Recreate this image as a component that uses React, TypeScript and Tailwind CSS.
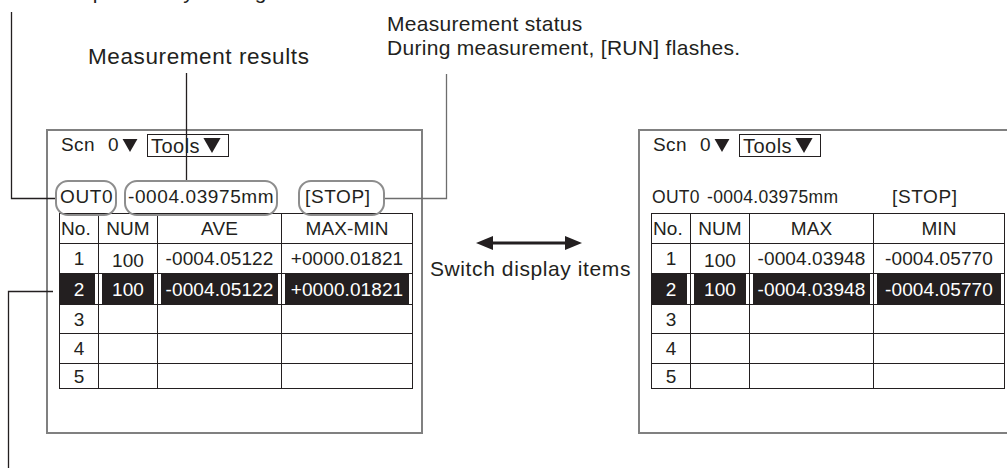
import type { ReactNode } from "react";

// Two monitor screens with callouts: the left one rings the status items,
// the right one shows the same screen after switching display items.

type Row = [string, string, string, string];

const LEFT_ROWS: Row[] = [
  ["1", "100", "-0004.05122", "+0000.01821"],
  ["2", "100", "-0004.05122", "+0000.01821"],
  ["3", "", "", ""],
  ["4", "", "", ""],
  ["5", "", "", ""],
];

const RIGHT_ROWS: Row[] = [
  ["1", "100", "-0004.03948", "-0004.05770"],
  ["2", "100", "-0004.03948", "-0004.05770"],
  ["3", "", "", ""],
  ["4", "", "", ""],
  ["5", "", "", ""],
];

const ROW_H = ["h-[30px]", "h-[31px]", "h-[29px]", "h-[30px]", "h-[25px]"];

function Tri({ className }: { className?: string }) {
  return (
    <svg viewBox="0 0 16 14" className={className} aria-hidden>
      <path d="M0 0H16L8 14Z" fill="currentColor" />
    </svg>
  );
}

function Ring({ ringed, className, children }: { ringed: boolean; className: string; children: ReactNode }) {
  return (
    <span
      className={`flex h-[36px] items-center rounded-[13px] border-2 pb-[1px] ${
        ringed ? "border-[#8d8d8d]" : "border-transparent"
      } ${className}`}
    >
      {children}
    </span>
  );
}

interface ScreenProps {
  headers: [string, string];
  rows: Row[];
  ringed: boolean;
}

function Screen({ headers, rows, ringed }: ScreenProps) {
  return (
    <div className="h-[305px] w-[377px] shrink-0 border-2 border-[#808080] pl-[11px] pt-[3px]">
      <div className="flex h-[23px] items-center text-[19px] tracking-[0.4px]">
        <span className="ml-[2px]">Scn</span>
        <span className="ml-[13px] flex items-center">
          0<Tri className="ml-[3px] h-[13px] w-[16px]" />
        </span>
        <span className="ml-[9px] flex h-[23px] w-[82px] items-center border border-[#231f20] pl-[3px] text-[20px] tracking-[0.5px]">
          Tools
          <Tri className="ml-[2px] h-[15px] w-[20px]" />
        </span>
      </div>

      {ringed ? (
        <div className="relative z-10 -mb-[3px] ml-[-4px] flex h-[59px] items-end text-[19px] tracking-[0.6px]">
          <Ring ringed className="w-[62px] pl-[3px]">
            OUT0
          </Ring>
          <Ring ringed className="ml-[7px] w-[154px] pl-[2px]">
            -0004.03975mm
          </Ring>
          <Ring ringed className="ml-[20px] w-[87px] pl-[5px]">
            [STOP]
          </Ring>
        </div>
      ) : (
        <div className="-mb-[3px] ml-[-4px] flex h-[59px] items-end text-[19px]">
          <Ring ringed={false} className="w-[58px] pl-[3px] text-[17.5px] tracking-[0.3px]">
            OUT0
          </Ring>
          <Ring ringed={false} className="w-[154px] pl-[0px] text-[17.5px] tracking-[0.3px]">
            -0004.03975mm
          </Ring>
          <Ring ringed={false} className="ml-[26px] w-[87px] pl-[5px] tracking-[0.6px]">
            [STOP]
          </Ring>
        </div>
      )}

      <table className="w-[353px] table-fixed border-collapse text-[19px] leading-none tracking-[0.1px]">
        <colgroup>
          <col className="w-[39px]" />
          <col className="w-[59px]" />
          <col className="w-[124px]" />
          <col className="w-[131px]" />
        </colgroup>
        <thead>
          <tr className="h-[30px]">
            <th className="border border-[#231f20] pl-[1px] text-left font-normal">No.</th>
            <th className="border border-[#231f20] text-center font-normal">NUM</th>
            <th className="border border-[#231f20] text-center font-normal">{headers[0]}</th>
            <th className="border border-[#231f20] text-center font-normal">{headers[1]}</th>
          </tr>
        </thead>
        <tbody>
          {rows.map((row, i) => {
            const hot = i === 1;
            return (
              <tr key={row[0]} className={ROW_H[i]}>
                {row.map((cell, j) => (
                  <td
                    key={j}
                    className={`border border-[#231f20] p-0 text-center ${
                      hot
                        ? j === 0
                          ? "bg-[#231f20] text-white shadow-[inset_-3px_0_0_#fff]"
                          : "bg-[#231f20] text-white shadow-[inset_3px_0_0_#fff,inset_-3px_0_0_#fff]"
                        : ""
                    } ${j === 1 && !hot ? "pt-[3px]" : ""}`}
                  >
                    {cell}
                  </td>
                ))}
              </tr>
            );
          })}
        </tbody>
      </table>
    </div>
  );
}

export default function App() {
  return (
    <div className="relative h-[468px] w-[1007px] overflow-hidden bg-white font-['Liberation_Sans',Arial,sans-serif] text-[#231f20]">
      <p className="absolute left-[5px] top-[-19px] whitespace-nowrap text-[21px] leading-none tracking-[0.6px]">
        Each output No. by setting
      </p>
      <p className="absolute left-[88px] top-[46px] whitespace-nowrap text-[22.5px] leading-none tracking-[0.6px]">
        Measurement results
      </p>
      <div className="absolute left-[387px] top-[12px] whitespace-nowrap text-[21px] leading-[24px] tracking-[0.3px]">
        <p>Measurement status</p>
        <p>During measurement, [RUN] flashes.</p>
      </div>

      <div className="flex pl-[46px] pt-[129px]">
        <Screen headers={["AVE", "MAX-MIN"]} rows={LEFT_ROWS} ringed />

        <div className="flex w-[215px] shrink-0 flex-col items-center pt-[106px]">
          <svg width="106" height="16" viewBox="0 0 106 16" className="-ml-[3px]" aria-hidden>
            <path d="M12 6.5H94V9.5H12Z" fill="#231f20" />
            <path d="M0 8L17 1V15Z" fill="#231f20" />
            <path d="M106 8L89 1V15Z" fill="#231f20" />
          </svg>
          <span className="mt-[7px] whitespace-nowrap text-[21px] leading-none tracking-[0.6px]">
            Switch display items
          </span>
        </div>

        <Screen headers={["MAX", "MIN"]} rows={RIGHT_ROWS} ringed={false} />
      </div>

      <svg className="pointer-events-none absolute inset-0" width="1007" height="468" aria-hidden>
        <g fill="none" stroke="#231f20" strokeWidth="1.3">
          <path d="M11.5 12V198.5H55" />
          <path d="M186.5 73V181" />
          <path d="M8.5 468V291.5H53" />
        </g>
        <path d="M446.5 74V198.5H385" fill="none" stroke="#6d6d6d" strokeWidth="1.3" />
      </svg>
    </div>
  );
}
